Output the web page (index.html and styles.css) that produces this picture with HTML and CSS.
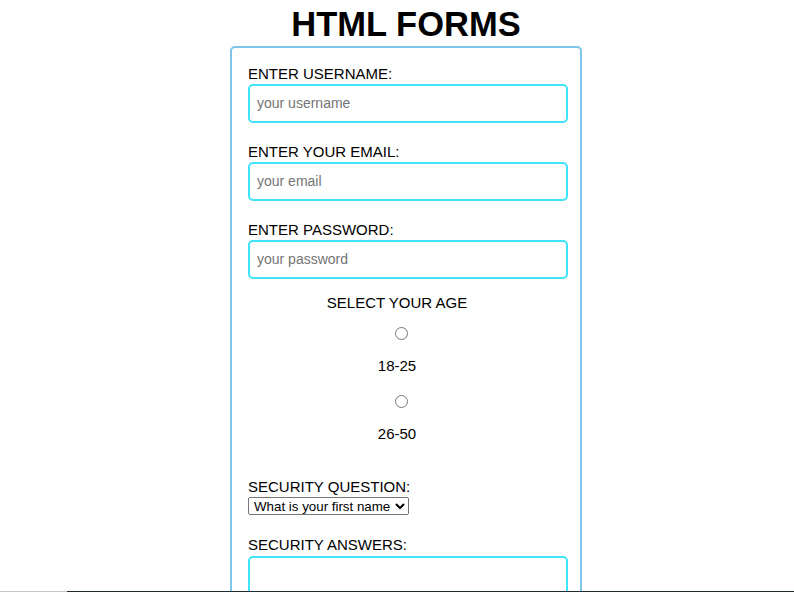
FILE: index.html
```html
<!DOCTYPE html>
<html lang="en">
<head>
  <meta charset="UTF-8">
  <title>HTML Forms</title>
  <link rel="stylesheet" href="styles.css">
</head>
<body>
  <div class="wrap">
    <h1>HTML FORMS</h1>
    <form class="box">
      <div class="field">
        <label for="username">ENTER USERNAME:</label>
        <input type="text" id="username" placeholder="your username">
      </div>

      <div class="field">
        <label for="email">ENTER YOUR EMAIL:</label>
        <input type="email" id="email" placeholder="your email">
      </div>

      <div class="field field-last">
        <label for="password">ENTER PASSWORD:</label>
        <input type="password" id="password" placeholder="your password">
      </div>

      <div class="age">
        <p class="age-title">SELECT YOUR AGE</p>
        <input type="radio" name="age" id="age1" value="18-25">
        <label for="age1">18-25</label>
        <input type="radio" name="age" id="age2" value="26-50">
        <label for="age2">26-50</label>
      </div>

      <div class="question">
        <label for="question">SECURITY QUESTION:</label>
        <select id="question">
          <option>What is your first name</option>
          <option>What is your pet's name</option>
        </select>
      </div>

      <div class="field">
        <label for="answer">SECURITY ANSWERS:</label>
        <input type="text" id="answer">
      </div>
    </form>
  </div>
  <div class="bottom-line"></div>
</body>
</html>
```

FILE: styles.css
```css
body {
  margin: 0;
  font-family: "Liberation Sans", Arial, sans-serif;
  color: #000;
  background: #fff;
}

.wrap {
  width: 352px;
  margin-left: 230px;
}

h1 {
  margin: 5px 0 2px;
  text-align: center;
  font-size: 34.5px;
  font-weight: bold;
}

.box {
  box-sizing: border-box;
  width: 352px;
  padding: 16.5px 12px 40px 16px;
  border: 2px solid #7dc6e8;
  border-radius: 5px;
}

.field label,
.question label {
  display: block;
  font-size: 15px;
}

.field {
  margin-bottom: 20px;
}

.field-last {
  margin-bottom: 15px;
}

.field input {
  display: block;
  box-sizing: border-box;
  width: 320px;
  height: 39px;
  margin-top: 2px;
  padding: 0 7px;
  border: 2px solid #3fe3fb;
  border-radius: 5px;
  font-family: "Liberation Sans", Arial, sans-serif;
  font-size: 14px;
  outline: none;
}

.field input::placeholder {
  color: #757575;
}

.age {
  width: 298px;
  display: flex;
  flex-direction: column;
  align-items: center;
  font-size: 15px;
}

.age-title {
  margin: 0 0 16.5px;
}

.age input {
  width: 13px;
  height: 13px;
  margin: 0 0 0 9px;
}

.age label {
  margin: 17.2px 0 20.6px;
}

.age label:last-child {
  margin-bottom: 36px;
}

.question {
  margin-bottom: 21px;
}

.question select {
  display: block;
  box-sizing: border-box;
  width: 161px;
  height: 18px;
  margin-top: 2px;
  padding: 0 0 0 1px;
  font-family: "Liberation Sans", Arial, sans-serif;
  font-size: 13.33px;
}

.question + .field input {
  margin-top: 3.5px;
}

.bottom-line {
  position: fixed;
  left: 0;
  right: 0;
  bottom: 0;
  height: 1px;
  background: linear-gradient(to right, #c6c6c6 67px, #1f2a30 67px);
}
```
